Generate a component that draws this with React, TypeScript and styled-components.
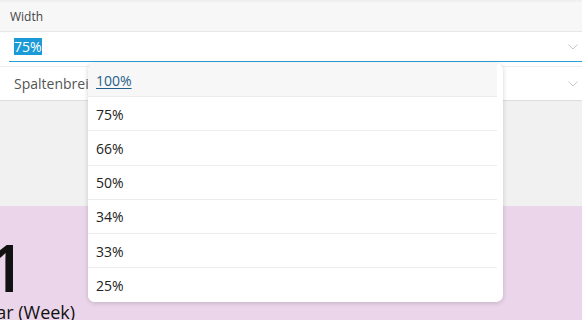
import * as React from "react";
import styled, { createGlobalStyle } from "styled-components";

const GlobalStyle = createGlobalStyle`
  html, body {
    margin: 0;
    padding: 0;
    background: #ffffff;
    font-family: "Open Sans", "Noto Sans", sans-serif;
  }
`;

const Page = styled.div`
  position: relative;
  width: 582px;
  height: 320px;
  overflow: hidden;
`;

const Header = styled.div`
  height: 29px;
  border-top: 2px solid #f0f0f0;
  border-bottom: 1px solid #e7e7e7;
  background: #f7f7f7;
  display: flex;
  align-items: center;
  padding-left: 10px;
  font-size: 12px;
  color: #444;
`;

const InputRow = styled.div`
  height: 30px;
  padding-left: 9px;
  display: flex;
`;

const Field = styled.div`
  flex: 1;
  display: flex;
  align-items: center;
  justify-content: space-between;
  padding: 0 4px 0 5px;
  border-bottom: 1px solid #2a9fd6;
  font-size: 14px;
  color: #222;
`;

const Selected = styled.span`
  background: #1a9ad6;
  color: #fff;
  line-height: 16px;
  padding-top: 1px;
`;

const SelectRow = styled.div`
  margin-top: 4px;
  height: 33px;
  border-top: 1px solid #ececec;
  border-bottom: 1px solid #dedede;
  display: flex;
  align-items: center;
  justify-content: space-between;
  padding: 0 4px 0 14px;
  font-size: 14px;
  color: #555;
`;

const GreyArea = styled.div`
  height: 105px;
  background: #f1f1f1;
`;

const PinkArea = styled.div`
  height: 115px;
  background: #ebd5ea;
  padding-top: 20px;
  color: #111;
`;

const BigNumber = styled.div`
  font-size: 66px;
  font-weight: 600;
  line-height: 80px;
  margin-left: -50px;
`;

const Caption = styled.div`
  font-size: 18px;
  line-height: 24px;
  margin-left: -24px;
  margin-top: -6px;
`;

const Dropdown = styled.div`
  position: absolute;
  left: 88px;
  top: 63px;
  width: 409px;
  padding-right: 6px;
  background: #fff;
  border-radius: 7px;
  box-shadow: 0 1px 5px rgba(0, 0, 0, 0.18);
  overflow: hidden;
`;

const Item = styled.div<{ $active?: boolean }>`
  box-sizing: border-box;
  height: 34.2px;
  display: flex;
  align-items: center;
  padding-left: 8px;
  padding-top: 1px;
  font-size: 14px;
  color: ${({ $active }) => ($active ? "#1f5f8b" : "#222")};
  background: ${({ $active }) => ($active ? "#f7f7f7" : "#fff")};
  text-decoration: ${({ $active }) => ($active ? "underline" : "none")};
  text-underline-offset: 2px;
  border-bottom: 1px solid #ececec;

  &:last-child {
    border-bottom: none;
  }
`;

const Chevron: React.FC = () => (
  <svg width="10" height="6" viewBox="0 0 10 6">
    <path d="M0.5 0.5 L5 5 L9.5 0.5" fill="none" stroke="#c8c8c8" strokeWidth="1" />
  </svg>
);

const options = ["100%", "75%", "66%", "50%", "34%", "33%", "25%"];

export default function App() {
  return (
    <Page>
      <GlobalStyle />
      <Header>Width</Header>
      <InputRow>
        <Field>
          <Selected>75%</Selected>
          <Chevron />
        </Field>
      </InputRow>
      <SelectRow>
        <span>Spaltenbreite</span>
        <Chevron />
      </SelectRow>
      <GreyArea />
      <PinkArea>
        <BigNumber>21</BigNumber>
        <Caption>Year (Week)</Caption>
      </PinkArea>
      <Dropdown>
        {options.map((o, i) => (
          <Item key={o} $active={i === 0}>
            {o}
          </Item>
        ))}
      </Dropdown>
    </Page>
  );
}
